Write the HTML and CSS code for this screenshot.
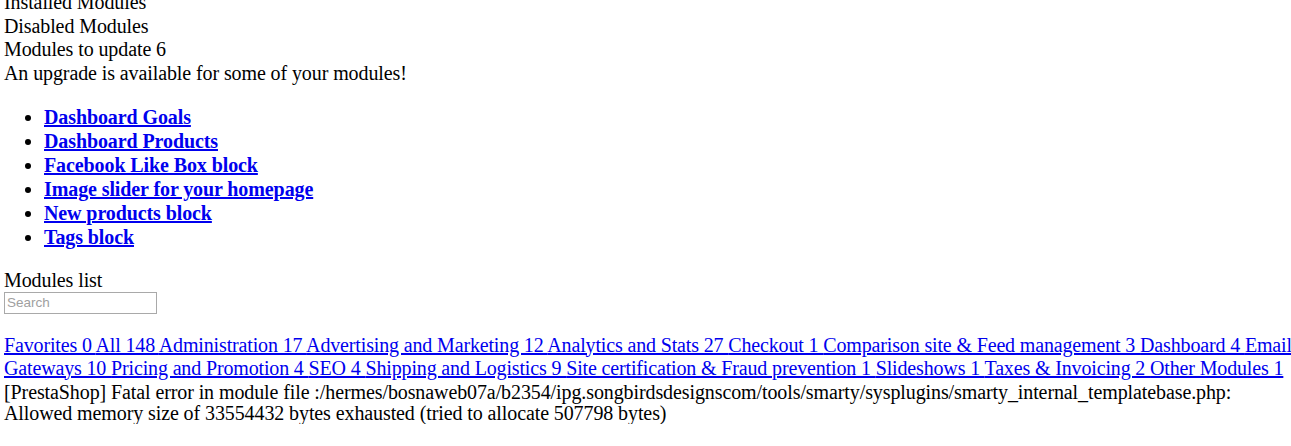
FILE: index.html
```html
<!DOCTYPE html>
<html>
<head>
<meta charset="utf-8">
<title>Modules</title>
<link rel="stylesheet" href="styles.css">
</head>
<body>
<div class="page">
  <div class="tab">Installed Modules</div>
  <div class="tab">Disabled Modules</div>
  <div class="tab">Modules to update 6</div>
  <div class="notice">An upgrade is available for some of your modules!</div>
  <ul class="updates">
    <li><a href="#">Dashboard Goals</a></li>
    <li><a href="#">Dashboard Products</a></li>
    <li><a href="#">Facebook Like Box block</a></li>
    <li><a href="#">Image slider for your homepage</a></li>
    <li><a href="#">New products block</a></li>
    <li><a href="#">Tags block</a></li>
  </ul>
  <div class="list-title">Modules list</div>
  <input class="search" type="text" placeholder="Search">
  <div class="cats"><a href="#">Favorites 0 </a><a href="#">All 148 </a><a href="#">Administration 17 </a><a href="#">Advertising and Marketing 12 </a><a href="#">Analytics and Stats 27 </a><a href="#">Checkout 1 </a><a href="#">Comparison site &amp; Feed management 3 </a><a href="#">Dashboard 4 </a><a href="#">Emailing 2 Payments and</a><br><a href="#">Gateways 10 </a><a href="#">Pricing and Promotion 4 </a><a href="#">SEO 4 </a><a href="#">Shipping and Logistics 9 </a><a href="#">Site certification &amp; Fraud prevention 1 </a><a href="#">Slideshows 1 </a><a href="#">Taxes &amp; Invoicing 2 </a><a href="#">Other Modules 1</a></div>
  <div class="error">[PrestaShop] Fatal error in module file :/hermes/bosnaweb07a/b2354/ipg.songbirdsdesignscom/tools/smarty/sysplugins/smarty_internal_templatebase.php:<br>Allowed memory size of 33554432 bytes exhausted (tried to allocate 507798 bytes)</div>
</div>
</body>
</html>
```
FILE: styles.css
```css
html, body {
  margin: 0;
  padding: 0;
  background: #fff;
  overflow: hidden;
}
body {
  font-family: "Liberation Serif", "Times New Roman", serif;
  font-size: 20px;
  letter-spacing: -0.1px;
  color: #000;
}
.page {
  padding-left: 4px;
  margin-top: -9px;
}
.tab, .notice, .list-title {
  line-height: 23.5px;
}
.updates {
  margin: 20px 0;
  padding-left: 40px;
  line-height: 24px;
}
.updates a {
  font-weight: bold;
  color: #0000ee;
}
.search {
  display: block;
  box-sizing: border-box;
  width: 153px;
  height: 22px;
  margin: -1px 0 20px;
  padding: 1px 2px;
  border: 1px solid #a9a9a9;
  font-family: "Liberation Sans", Arial, sans-serif;
  font-size: 13.5px;
  letter-spacing: 0;
}
.search::placeholder {
  color: #a0a0a0;
  font-size: 13.5px;
}
.cats {
  white-space: nowrap;
  line-height: 23px;
  letter-spacing: -0.15px;
}
.cats a {
  color: #0000ee;
}
.error {
  white-space: nowrap;
  padding-top: 2px;
  line-height: 21px;
}
```
